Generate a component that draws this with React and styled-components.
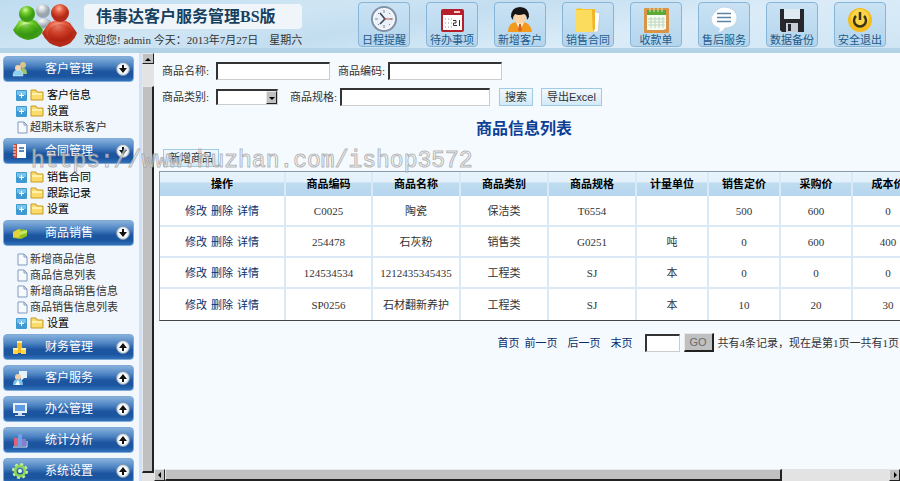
import React, { useState } from 'react';
import styled, { createGlobalStyle, css } from 'styled-components';

const GlobalStyle = createGlobalStyle`
  * {
    box-sizing: border-box;
  }
  body {
    margin: 0;
    overflow: hidden;
    background: #f5faff;
    color: #333;
    font-family: 'Liberation Serif', 'Noto Sans CJK SC', serif;
    font-size: 11px;
    line-height: 16px;
  }
  button, input, select {
    font: inherit;
    color: inherit;
  }
  ul {
    margin: 0;
    padding: 0;
    list-style: none;
  }
  svg {
    display: block;
    flex: none;
  }
`;

const Page = styled.div`
  position: relative;
  display: flex;
  flex-direction: column;
  height: 100vh;
  overflow: hidden;
`;

const Header = styled.header`
  display: flex;
  flex: none;
  align-items: flex-start;
  justify-content: space-between;
  padding: 2px 14px 0 10px;
  border-bottom: 5px solid #b5d3e6;
  background: linear-gradient(170deg, #bfdcef 0%, #cfe5f4 30%, #c3def0 45%, #dbecf8 70%, #d0e5f4 100%);
`;

const Brand = styled.div`
  display: flex;
  gap: 7px;
`;

const BrandText = styled.div`
  padding-top: 2px;
`;

const Title = styled.h1`
  margin: 0 0 3px;
  padding: 0 10px 0 12px;
  border-radius: 4px;
  background: #f0f5fa;
  color: #16405f;
  font-size: 16px;
  font-weight: 600;
  line-height: 25px;
`;

const Welcome = styled.div`
  white-space: pre;
`;

const Toolbar = styled.nav`
  display: flex;
  gap: 16px;
`;

const ToolButton = styled.button`
  display: flex;
  flex-direction: column;
  align-items: center;
  justify-content: space-between;
  width: 52px;
  height: 45px;
  padding: 2px 0 0;
  border: 1px solid #86b5d8;
  border-radius: 4px;
  background: linear-gradient(#c9e2f4, #b4d5ec);
  color: #1c5a8c;
  line-height: 14px;
  white-space: nowrap;
  cursor: pointer;
`;

const Body = styled.div`
  display: flex;
  flex: 1;
  min-height: 0;
`;

const Sidebar = styled.aside`
  flex: none;
  width: 142px;
  padding: 3px 5px 0 3px;
  border-right: 3px solid #cfe2fb;
  background: #f1f7fd;
  overflow: hidden;
`;

const SectionButton = styled.button`
  display: flex;
  align-items: center;
  width: 100%;
  height: 26px;
  padding: 0 3px 0 8px;
  border: 1px solid #7fa9d6;
  border-radius: 4px;
  background: linear-gradient(#86b0dc 0%, #4c83c2 35%, #1d55a0 60%, #1b549f 80%, #3273bb 100%);
  color: #fff;
  font-size: 12px;
  cursor: pointer;

  span {
    flex: 1;
    padding-right: 6px;
    text-align: center;
  }
`;

const SectionBody = styled.ul`
  padding: 5px 0 3px 13px;
  ${({ $closed }) => $closed && css`
    padding-bottom: 0;
  `}
`;

const NavItem = styled.li`
  height: 16px;
  a {
    display: flex;
    align-items: center;
    gap: ${({ $folder }) => ($folder ? '3px' : '1px')};
    color: ${({ $folder }) => ($folder ? '#000' : '#333')};
    text-decoration: none;
    white-space: nowrap;
  }
`;

const raised = css`
  border: 1px solid;
  border-color: #e8e8e8 #222 #222 #e8e8e8;
  background: #c0c0c0;
`;

const Scrollbar = styled.div`
  display: flex;
  flex: none;
  flex-direction: ${({ $horizontal }) => ($horizontal ? 'row' : 'column')};
  ${({ $horizontal }) => ($horizontal ? 'height: 12px;' : 'width: 12px;')}
  background: #e3e3e3;
`;

const ScrollArrow = styled.div`
  ${raised}
  display: flex;
  flex: none;
  align-items: center;
  justify-content: center;
  width: ${({ $horizontal }) => ($horizontal ? '11px' : '12px')};
  height: ${({ $horizontal }) => ($horizontal ? '12px' : '11px')};
`;

const ScrollThumb = styled.div`
  ${raised}
  border-right-width: 2px;
  border-bottom-width: 2px;
  flex: ${({ $size }) => $size};
`;

const ScrollSpace = styled.div`
  flex: ${({ $size }) => $size};
`;

const Main = styled.main`
  display: flex;
  flex: 1;
  flex-direction: column;
  min-width: 0;
`;

const Content = styled.div`
  flex: 1;
  min-height: 0;
  padding: 9px 0 0 5px;
  overflow: hidden;
`;

const FilterForm = styled.form`
  display: flex;
  flex-direction: column;
  gap: 8px;
  padding-left: 3px;
`;

const FilterRow = styled.div`
  display: flex;
  align-items: center;
  height: 18px;
`;

const Field = styled.label`
  display: flex;
  align-items: center;
  margin-right: ${({ $gap }) => $gap}px;
  white-space: nowrap;

  span {
    min-width: ${({ $label }) => $label}px;
  }
`;

const sunken = css`
  border: 1px solid #ccc;
  border-top: 2px solid #333;
  border-left: 2px solid #333;
  border-radius: 0;
  background: #fff;
  outline: none;
`;

const TextInput = styled.input`
  ${sunken}
  width: ${({ $width }) => $width}px;
  height: 18px;
  padding: 0 2px;
`;

const SelectBox = styled.div`
  ${sunken}
  display: flex;
  width: 62px;
  height: 16px;
  position: relative;

  select {
    width: 100%;
    border: 0;
    padding: 0;
    appearance: none;
    background: transparent;
    outline: none;
  }
`;

const SelectArrow = styled.i`
  ${raised}
  position: absolute;
  top: 0;
  right: 0;
  bottom: 0;
  display: flex;
  align-items: center;
  justify-content: center;
  width: 11px;
  pointer-events: none;
`;

const ActionButton = styled.button`
  height: 18px;
  margin-right: 8px;
  padding: 0 5px;
  border: 1px solid #9fcbe4;
  background: linear-gradient(#f2f9fe, #d3e9f7);
  font-family: 'Liberation Sans', 'Noto Sans CJK SC', sans-serif;
  line-height: 14px;
  white-space: nowrap;
  cursor: pointer;
`;

const ListTitle = styled.h2`
  margin: 11px 11px 9px 0;
  color: #0b3f95;
  font-size: 16px;
  font-weight: 700;
  line-height: 23px;
  text-align: center;
`;

const AddRow = styled.div`
  padding: 0 0 4px 4px;
`;

const Table = styled.table`
  width: calc(100% + 24px);
  table-layout: fixed;
  border-collapse: separate;
  border-spacing: 0;
  border: 1px solid #8b99a6;
  border-bottom-color: #444;
  background: #fff;
  text-align: center;

  th, td {
    padding: 0;
    border-right: 2px solid #dbe9f6;
    overflow: hidden;
    white-space: nowrap;
  }
  th {
    height: 24px;
    background: linear-gradient(#e9f4fc 0, #e4f1fb 10px, #c0dcf0 11px, #b5d6ee 24px);
    color: #000;
    font-weight: 700;
  }
  td {
    height: 31px;
    border-bottom: 2px solid #dbe9f6;
  }
  tr:last-child td {
    border-bottom: 0;
  }
`;

const Col = styled.col`
  width: ${({ $width }) => $width}px;
`;

const Link = styled.a`
  color: #0a2f6b;
  text-decoration: none;
  white-space: nowrap;
`;

const RowLinks = styled.div`
  display: flex;
  justify-content: center;
  gap: 4px;
`;

const Pagination = styled.form`
  display: flex;
  align-items: center;
  justify-content: flex-end;
  padding: 12px 1px 0 0;
  white-space: nowrap;
`;

const PageLinks = styled.div`
  display: flex;
  gap: 10px;
  margin-right: 12px;
`;

const BackLinks = styled.div`
  display: flex;
  gap: 5px;
`;

const GoButton = styled.button`
  ${raised}
  border-right-width: 2px;
  border-bottom-width: 2px;
  width: 30px;
  height: 19px;
  margin: 0 4px;
  padding: 0;
  color: #6b6b6b;
  font-family: 'Liberation Sans', sans-serif;
`;

const Watermark = styled.div`
  position: absolute;
  top: 147px;
  left: 31px;
  color: rgba(255, 255, 255, 0.6);
  font-family: 'Liberation Mono', monospace;
  font-size: 23px;
  line-height: 28px;
  -webkit-text-stroke: 1px rgba(150, 150, 150, 0.7);
  pointer-events: none;
`;

const Logo = () => (
  <svg width="67" height="46" viewBox="0 0 67 46" aria-hidden="true">
    <defs>
      <radialGradient id="green" cx="40%" cy="25%">
        <stop offset="0" stopColor="#d7f7a0" />
        <stop offset="0.5" stopColor="#6ccb25" />
        <stop offset="1" stopColor="#3f9d15" />
      </radialGradient>
      <radialGradient id="red" cx="45%" cy="25%">
        <stop offset="0" stopColor="#ffb09a" />
        <stop offset="0.5" stopColor="#e2573a" />
        <stop offset="1" stopColor="#b52a18" />
      </radialGradient>
      <radialGradient id="silver" cx="40%" cy="25%">
        <stop offset="0" stopColor="#fff" />
        <stop offset="1" stopColor="#98a5ad" />
      </radialGradient>
    </defs>
    <path d="M24 27q2-11 10-11t9 10z" fill="url(#silver)" />
    <circle cx="33" cy="9" r="7" fill="url(#silver)" />
    <path d="M3 28l6-9q9-5 17 0l7 9q-2 8-15 10Q7 36 3 28z" fill="url(#green)" />
    <circle cx="17" cy="12" r="8" fill="url(#green)" />
    <ellipse cx="18" cy="29" rx="10" ry="7" fill="#2c8d10" opacity="0.35" />
    <path d="M32 31l7-10q11-7 21 0l7 10q-4 12-17 14-13-2-18-14z" fill="url(#red)" />
    <circle cx="50" cy="11" r="9" fill="url(#red)" />
    <ellipse cx="50" cy="31" rx="12" ry="9" fill="#a81706" opacity="0.35" />
  </svg>
);

const TOOL_ICONS = {
  clock: (
    <>
      <circle cx="14" cy="14" r="12" fill="#fff" stroke="#8290a8" strokeWidth="2" />
      <circle cx="14" cy="14" r="10" fill="#eaf1f8" />
      <path d="M14 5v3M14 20v3M5 14h3M20 14h3M8 8l1 1M20 8l-1 1M8 20l1-1M20 20l-1-1" stroke="#7d8898" strokeWidth="1" />
      <path d="M10 8l5 6-5 5" fill="none" stroke="#3a3f55" strokeWidth="1.5" />
      <path d="M13 14h9" stroke="#b45f4f" strokeWidth="1" />
    </>
  ),
  calendar: (
    <>
      <rect x="3" y="4" width="23" height="23" rx="2" fill="#b5202a" />
      <path d="M5 10h19v15H5z" fill="#fff" />
      <path d="M16 7h6" stroke="#f3c9c9" strokeWidth="2" />
      <path d="M7 14h7M7 18h7M7 22h7" stroke="#b9b9b9" strokeDasharray="1 2" strokeWidth="1.5" />
      <path d="M15 15.5h3v2.5h-2.5v2.5H19M21.5 15v6" fill="none" stroke="#333" strokeWidth="1" />
    </>
  ),
  user: (
    <>
      <path d="M2 27q0-9 8-10h7q8 1 9 10z" fill="#f39a1e" />
      <path d="M10 17l4 9 4-9z" fill="#fff" />
      <path d="M13 19h2l1 6-2 2-2-2z" fill="#d9641e" />
      <ellipse cx="14" cy="12" rx="6" ry="7" fill="#fbd3a4" />
      <path d="M5 12q0-10 9-10t9 10l-2 3q0-5-3-6-5 2-9 0-2 2-2 6z" fill="#161616" />
    </>
  ),
  folder: (
    <>
      <path d="M15 5l11 3-2 19H12z" fill="#fff" stroke="#c8cdd4" />
      <path d="M2 4l4-1 2 1h13v20l-4 3H2z" fill="#f8c52c" />
      <path d="M2 5h16l1 22H2z" fill="#fbdc5c" />
      <path d="M18 5l3-1v20l-2 3z" fill="#f0b52a" />
    </>
  ),
  receipt: (
    <>
      <rect x="2" y="3" width="25" height="25" rx="1" fill="#d99545" />
      <path d="M5 6h19v18l-3 1H5z" fill="#f5fbf2" />
      <path d="M5 5h19v5H5z" fill="#5aaa35" />
      <path d="M8 2v5M12 2v5M16 2v5M20 2v5" stroke="#e6dfae" strokeWidth="1" />
      <path d="M6 14h17M6 17h17M6 20h17M9 12v11M13 12v11M17 12v11M21 12v11" stroke="#bcd6bb" strokeWidth="1" />
    </>
  ),
  chat: (
    <>
      <path d="M14 2c8 0 13 5 13 11s-5 10-12 10q-2 4-7 5 2-3 1-5-8-2-8-10S6 2 14 2z" fill="#fff" stroke="#c1d7e8" />
      <path d="M7 8.5h14M7 12.5h14M7 16.5h14" stroke="#5c84a6" strokeWidth="1.5" />
    </>
  ),
  floppy: (
    <>
      <path d="M2 4h24v23H4l-2-2z" fill="#25272c" />
      <path d="M6 4h16v10H6z" fill="#dfe9f1" />
      <path d="M8 18h12v9H8z" fill="#c5ced6" />
      <path d="M10 19h3v7h-3z" fill="#25272c" />
    </>
  ),
  power: (
    <>
      <circle cx="14" cy="15" r="12" fill="#f5bd1d" />
      <circle cx="14" cy="13" r="9" fill="#ffdf5e" opacity="0.7" />
      <path d="M10 11a6 6 0 1 0 8 0M14 7v8" fill="none" stroke="#3c3416" strokeWidth="2.5" />
    </>
  ),
};

const MENU_ICONS = {
  customers: (
    <>
      <circle cx="11" cy="4" r="3" fill="#d9c48a" />
      <path d="M7 13q0-6 4-6t4 6z" fill="#9cc46c" />
      <circle cx="6" cy="7" r="3" fill="#f3d3b0" />
      <path d="M1 15q0-6 5-6t5 6z" fill="#8ed0ef" stroke="#e6f5ff" strokeWidth="0.5" />
    </>
  ),
  contract: (
    <>
      <path d="M2 1h12v14H2z" fill="#fff" />
      <path d="M2 1h3v14H2z" fill="#c84c3c" />
      <path d="M1 3h3M1 6h3M1 9h3M1 12h3" stroke="#eee" strokeWidth="1" />
      <path d="M7 5h5M7 8h5" stroke="#5b87c4" strokeWidth="2" />
    </>
  ),
  goods: (
    <>
      <path d="M1 7l6-3 8 1v6l-6 3-8-1z" fill="#8fc31f" />
      <path d="M1 7l6-3 2 3-2 6-6-1z" fill="#e4d238" />
      <path d="M7 7l8-2v3l-7 2z" fill="#c6e965" />
    </>
  ),
  money: (
    <>
      <path d="M5 2h5v12H5z" fill="#f6b81c" />
      <path d="M1 9h5v6H1zM9 9h5v6H9z" fill="#ffd44a" />
      <path d="M5 2h5v2H5zM1 9h5v2H1zM9 9h5v2H9z" fill="#fff0a0" />
    </>
  ),
  service: (
    <>
      <path d="M7 1h8v7h-3l-3 3V8H7z" fill="#e4f4ff" />
      <circle cx="6" cy="7" r="3" fill="#f2cfa8" />
      <path d="M1 15q0-6 5-6t5 6z" fill="#7cc3ea" />
      <path d="M3 15l3-5 2 5z" fill="#fff" />
    </>
  ),
  monitor: (
    <>
      <path d="M1 2h14v10H1z" fill="#e9f1fa" />
      <path d="M3 4h10v6H3z" fill="#5f9be0" />
      <path d="M6 12h4v2h3v1H3v-1h3z" fill="#cfdcea" />
    </>
  ),
  chart: (
    <>
      <path d="M2 6h4v8H2z" fill="#e0607a" />
      <path d="M6 2h4v12H6z" fill="#6c9fe6" />
      <path d="M10 7h4v7h-4z" fill="#8c7bcb" />
      <path d="M1 15h14V9" fill="none" stroke="#dfe9f5" />
    </>
  ),
  gear: (
    <>
      <circle cx="8" cy="8" r="5" fill="none" stroke="#8fd45a" strokeWidth="3" />
      <circle cx="8" cy="8" r="7" fill="none" stroke="#c5f09c" strokeDasharray="3 2.5" strokeWidth="2" />
      <circle cx="8" cy="8" r="2" fill="#e9ffd8" />
    </>
  ),
};

const Arrow = ({ open }) => (
  <svg width="14" height="14" viewBox="0 0 14 14" aria-hidden="true">
    <circle cx="7" cy="7" r="6.5" fill="#dfe8f0" stroke="#7c93ad" />
    <circle cx="7" cy="7" r="4.5" fill="#fff" />
    <path d={open ? 'M6 3h2v3h3L7 11 3 6h3z' : 'M6 11h2V8h3L7 3 3 8h3z'} fill="#111" />
  </svg>
);

const FolderIcons = () => (
  <>
    <svg width="11" height="11" viewBox="0 0 11 11" aria-hidden="true">
      <rect width="11" height="11" rx="1" fill="#3f9ad3" />
      <path d="M1 1h9v4H1z" fill="#7cc3ea" />
      <path d="M3 5.5h5M5.5 3v5" stroke="#fff" />
    </svg>
    <svg width="14" height="12" viewBox="0 0 14 12" aria-hidden="true">
      <path d="M1 3V1h5l1 2h6v8H1z" fill="#fbdc6a" stroke="#c99a25" />
      <path d="M2 4h10v2H2z" fill="#fff2ad" />
    </svg>
  </>
);

const FileIcon = () => (
  <svg width="13" height="13" viewBox="0 0 13 13" aria-hidden="true">
    <path d="M2 1h6l3 3v8H2z" fill="#f6faff" stroke="#8099bd" />
    <path d="M8 1v3h3" fill="none" stroke="#8099bd" />
  </svg>
);

const Triangle = ({ dir }) => {
  const points = {
    up: '0,5 3,2 6,5',
    down: '0,2 3,5 6,2',
    left: '4,0 1,3 4,6',
    right: '2,0 5,3 2,6',
  };
  return (
    <svg width="6" height="6" viewBox="0 0 6 6" aria-hidden="true">
      <polygon points={points[dir]} fill="#000" />
    </svg>
  );
};

const tools = [
  ['clock', '日程提醒'],
  ['calendar', '待办事项'],
  ['user', '新增客户'],
  ['folder', '销售合同'],
  ['receipt', '收款单'],
  ['chat', '售后服务'],
  ['floppy', '数据备份'],
  ['power', '安全退出'],
];

const menu = [
  {
    icon: 'customers',
    name: '客户管理',
    items: [['客户信息', true], ['设置', true], ['超期未联系客户', false]],
  },
  {
    icon: 'contract',
    name: '合同管理',
    items: [['销售合同', true], ['跟踪记录', true], ['设置', true]],
  },
  {
    icon: 'goods',
    name: '商品销售',
    items: [
      ['新增商品信息', false],
      ['商品信息列表', false],
      ['新增商品销售信息', false],
      ['商品销售信息列表', false],
      ['设置', true],
    ],
  },
  { icon: 'money', name: '财务管理', items: [] },
  { icon: 'service', name: '客户服务', items: [] },
  { icon: 'monitor', name: '办公管理', items: [] },
  { icon: 'chart', name: '统计分析', items: [] },
  { icon: 'gear', name: '系统设置', items: [] },
];

const columns = ['商品编码', '商品名称', '商品类别', '商品规格', '计量单位', '销售定价', '采购价', '成本价'];
const widths = [126, 87, 88, 88, 88, 72, 72, 72, 72];

const rows = [
  ['C0025', '陶瓷', '保洁类', 'T6554', '', '500', '600', '0'],
  ['254478', '石灰粉', '销售类', 'G0251', '吨', '0', '600', '400'],
  ['124534534', '1212435345435', '工程类', 'SJ', '本', '0', '0', '0'],
  ['SP0256', '石材翻新养护', '工程类', 'SJ', '本', '10', '20', '30'],
];

const MenuSection = ({ section }) => {
  const [open, setOpen] = useState(section.items.length > 0);

  return (
    <section>
      <SectionButton type="button" aria-expanded={open} onClick={() => setOpen(!open)}>
        <svg width="16" height="16" viewBox="0 0 16 16" aria-hidden="true">{MENU_ICONS[section.icon]}</svg>
        <span>{section.name}</span>
        <Arrow open={open} />
      </SectionButton>
      <SectionBody $closed={!open}>
        {open && section.items.map(([label, folder]) => (
          <NavItem key={label} $folder={folder}>
            <a href="#list">
              {folder ? <FolderIcons /> : <FileIcon />}
              {label}
            </a>
          </NavItem>
        ))}
      </SectionBody>
    </section>
  );
};

const App = () => (
  <Page>
    <GlobalStyle />
    <Header>
      <Brand>
        <Logo />
        <BrandText>
          <Title>伟事达客户服务管理BS版</Title>
          <Welcome>欢迎您! admin 今天：2013年7月27日　星期六</Welcome>
        </BrandText>
      </Brand>
      <Toolbar>
        {tools.map(([icon, label]) => (
          <ToolButton key={icon} type="button">
            <svg width="28" height="28" viewBox="0 0 28 28" aria-hidden="true">{TOOL_ICONS[icon]}</svg>
            {label}
          </ToolButton>
        ))}
      </Toolbar>
    </Header>
    <Body>
      <Sidebar>
        {menu.map((section) => <MenuSection key={section.name} section={section} />)}
      </Sidebar>
      <Scrollbar aria-hidden="true">
        <ScrollArrow><Triangle dir="up" /></ScrollArrow>
        <ScrollSpace $size={22} />
        <ScrollThumb $size={386} />
        <ScrollSpace $size={8} />
      </Scrollbar>
      <Main>
        <Content>
          <FilterForm onSubmit={(e) => e.preventDefault()}>
            <FilterRow>
              <Field $label={54} $gap={8}>
                <span>商品名称:</span>
                <TextInput type="text" $width={114} />
              </Field>
              <Field $label={50} $gap={0}>
                <span>商品编码:</span>
                <TextInput type="text" $width={114} />
              </Field>
            </FilterRow>
            <FilterRow>
              <Field $label={54} $gap={12}>
                <span>商品类别:</span>
                <SelectBox>
                  <select defaultValue=""><option value="" /></select>
                  <SelectArrow><Triangle dir="down" /></SelectArrow>
                </SelectBox>
              </Field>
              <Field $label={50} $gap={9}>
                <span>商品规格:</span>
                <TextInput type="text" $width={150} />
              </Field>
              <ActionButton type="submit">搜索</ActionButton>
              <ActionButton type="button">导出Excel</ActionButton>
            </FilterRow>
          </FilterForm>
          <ListTitle>商品信息列表</ListTitle>
          <AddRow>
            <ActionButton type="button">新增商品</ActionButton>
          </AddRow>
          <Table>
            <colgroup>
              {widths.map((width, i) => <Col key={i} $width={width} />)}
            </colgroup>
            <thead>
              <tr>
                <th>操作</th>
                {columns.map((name) => <th key={name}>{name}</th>)}
              </tr>
            </thead>
            <tbody>
              {rows.map((row) => (
                <tr key={row[0]}>
                  <td>
                    <RowLinks>
                      <Link href="#edit">修改</Link>
                      <Link href="#delete">删除</Link>
                      <Link href="#detail">详情</Link>
                    </RowLinks>
                  </td>
                  {row.map((value, i) => <td key={i}>{value}</td>)}
                </tr>
              ))}
            </tbody>
          </Table>
          <Pagination onSubmit={(e) => e.preventDefault()}>
            <PageLinks>
              <BackLinks>
                <Link href="#first">首页</Link>
                <Link href="#prev">前一页</Link>
              </BackLinks>
              <Link href="#next">后一页</Link>
              <Link href="#last">末页</Link>
            </PageLinks>
            <TextInput type="text" aria-label="页码" $width={35} />
            <GoButton type="submit">GO</GoButton>
            <span>共有4条记录，现在是第1页一共有1页</span>
          </Pagination>
        </Content>
        <Scrollbar $horizontal aria-hidden="true">
          <ScrollArrow $horizontal><Triangle dir="left" /></ScrollArrow>
          <ScrollThumb $size={616} />
          <ScrollSpace $size={107} />
          <ScrollArrow $horizontal><Triangle dir="right" /></ScrollArrow>
        </Scrollbar>
      </Main>
    </Body>
    <Watermark>https://www.huzhan.com/ishop3572</Watermark>
  </Page>
);

export default App;
